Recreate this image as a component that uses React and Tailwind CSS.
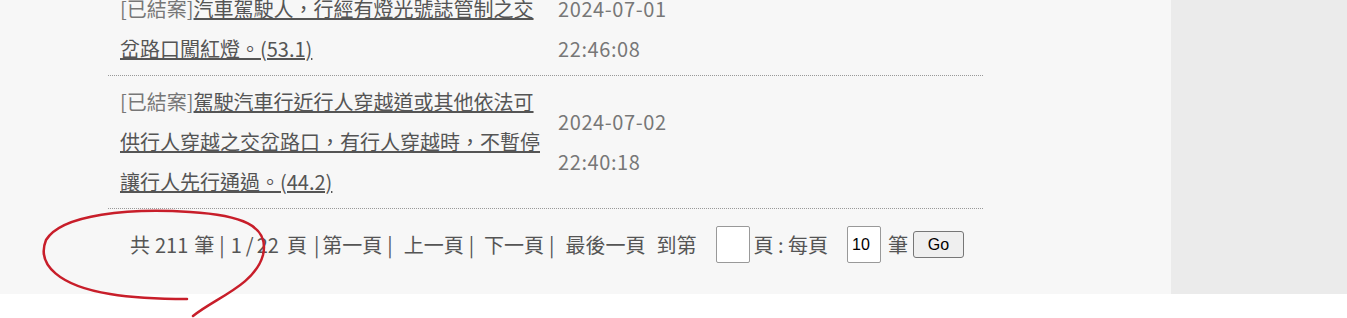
import React from 'react';

const rows = [
    { title: '汽車駕駛人，行經有燈光號誌管制之交岔路口闖紅燈。(53.1)', date: '2024-07-01', time: '22:46:08' },
    { title: '駕駛汽車行近行人穿越道或其他依法可供行人穿越之交岔路口，有行人穿越時，不暫停讓行人先行通過。(44.2)', date: '2024-07-02', time: '22:40:18' },
];

function Row({ r }) {
    return (
        <div className="flex items-center border-b border-dotted border-[#999] py-[6px]">
            <div className="w-[450px] px-3 text-[20px] leading-[40px]">
                <span className="text-[#777]">[已結案]</span>
                <a href="#" className="text-[#555] underline">{r.title}</a>
            </div>
            <div className="w-[130px] text-[20px] leading-[40px] tracking-[0.6px] text-[#777]">
                <div>{r.date}</div>
                <div>{r.time}</div>
            </div>
            <div className="flex-1"></div>
        </div>
    );
}

export default function App() {
    return (
        <div className="relative h-[318px] w-full overflow-hidden bg-white font-['Noto_Sans_CJK_TC',sans-serif]">
            <div className="flex h-[294px]">
                <div className="w-[1171px] overflow-hidden bg-[#f7f7f7]">
                    <div className="-mt-[17px] ml-[108px] w-[875px]">
                        {rows.map((r, i) => <Row key={i} r={r} />)}

                        {/* 分頁 */}
                        <div className="flex items-center pl-[22px] pt-[17px] text-[20px] text-[#555]">
                            <span>共</span>
                            <span className="ml-[5px]">211</span>
                            <span className="ml-[6px]">筆</span>
                            <span className="ml-[5px]">|</span>
                            <span className="ml-[6px]">1</span>
                            <span className="ml-[4px]">/</span>
                            <span className="ml-[3px]">22</span>
                            <span className="ml-[8px]">頁</span>
                            <span className="ml-[7px]">|</span>
                            <a href="#" className="ml-[3px]">第一頁</a>
                            <span className="ml-[5px]">|</span>
                            <a href="#" className="ml-[11px]">上一頁</a>
                            <span className="ml-[5px]">|</span>
                            <a href="#" className="ml-[10px]">下一頁</a>
                            <span className="ml-[5px]">|</span>
                            <a href="#" className="ml-[11px]">最後一頁</a>
                            <span className="ml-[11px]">到第</span>
                            <input className="ml-[19px] h-[37px] w-[34px] rounded-[2px] border border-[#999] bg-white" />
                            <span className="ml-[4px]">頁 : 每頁</span>
                            <input defaultValue="10" className="ml-[19px] h-[37px] w-[34px] rounded-[2px] border border-[#999] bg-white px-[4px] font-['Liberation_Sans',sans-serif] text-[16px] text-black" />
                            <span className="ml-[7px]">筆</span>
                            <button className="ml-[5px] h-[27px] w-[51px] rounded-[3px] border border-[#767676] bg-[#efefef] font-['Liberation_Sans',sans-serif] text-[16px] text-black">Go</button>
                        </div>
                    </div>
                </div>
                <div className="flex-1 bg-[#ebebeb]"></div>
            </div>

            {/* 紅色手繪圈 */}
            <svg className="pointer-events-none absolute left-0 top-0" width="1347" height="318" fill="none">
                <path d="M193 316 C 215 298, 255 285, 263 255 C 270 225, 240 215, 190 212 C 130 208, 62 214, 46 240 C 36 265, 60 286, 110 294 C 140 299, 170 299, 187 299" stroke="#c81e2a" strokeWidth="2.5" strokeLinecap="round" />
            </svg>
        </div>
    );
}
